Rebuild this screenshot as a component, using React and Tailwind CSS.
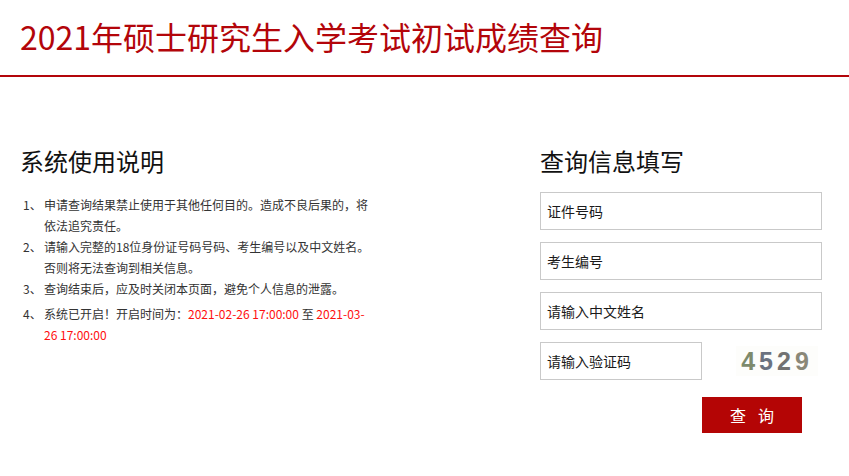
import React from "react";

const font = "font-['Noto_Sans_CJK_SC','Microsoft_YaHei',sans-serif]";

function Field({ placeholder, className = "" }) {
  return (
    <div
      className={`h-[38px] border border-[#c9c9c9] bg-white flex items-center pl-[6px] text-[14px] text-[#1a1a1a] ${className}`}
    >
      {placeholder}
    </div>
  );
}

export default function App() {
  const red = "text-[#ff1010]";
  return (
    <div className={`w-[849px] h-[476px] bg-white overflow-hidden ${font}`}>
      <header className="h-[77px] border-b-2 border-[#b3050a] pl-[20px] flex items-center pb-[4px]">
        <h1 className="text-[32px] leading-[40px] text-[#b3050a]">
          2021年硕士研究生入学考试初试成绩查询
        </h1>
      </header>

      <main className="flex pt-[66px]">
        <section className="w-[540px] pl-[20px]">
          <h2 className="text-[24px] leading-[36px] text-[#111]">系统使用说明</h2>
          <ol className="mt-[15px] text-[12px] leading-[21px] text-[#333] whitespace-nowrap">
            <li className="flex">
              <span className="w-[24px] pl-[3px] shrink-0">1、</span>
              <span>
                申请查询结果禁止使用于其他任何目的。造成不良后果的，将
                <br />
                依法追究责任。
              </span>
            </li>
            <li className="flex">
              <span className="w-[24px] pl-[3px] shrink-0">2、</span>
              <span>
                请输入完整的18位身份证号码号码、考生编号以及中文姓名。
                <br />
                否则将无法查询到相关信息。
              </span>
            </li>
            <li className="flex">
              <span className="w-[24px] pl-[3px] shrink-0">3、</span>
              <span>查询结束后，应及时关闭本页面，避免个人信息的泄露。</span>
            </li>
            <li className="flex mt-[4px]">
              <span className="w-[24px] pl-[3px] shrink-0">4、</span>
              <span>
                系统已开启！开启时间为：<span className={red}>2021-02-26 17:00:00</span> 至{" "}
                <span className={red}>2021-03-</span>
                <br />
                <span className={red}>26 17:00:00</span>
              </span>
            </li>
          </ol>
        </section>

        <section className="w-[282px]">
          <h2 className="text-[24px] leading-[36px] text-[#111]">查询信息填写</h2>
          <div className="mt-[13px] flex flex-col gap-[12px]">
            <Field placeholder="证件号码" />
            <Field placeholder="考生编号" />
            <Field placeholder="请输入中文姓名" />
            <div className="flex items-center">
              <Field placeholder="请输入验证码" className="w-[162px]" />
              <div className="ml-[34px] w-[82px] h-[30px] bg-[#fdfdfb] flex items-center justify-center font-['Liberation_Sans',sans-serif] font-bold text-[25px] tracking-[4px] leading-none">
                <span className="text-[#7d8a6c]">4</span>
                <span className="text-[#6b7280]">5</span>
                <span className="text-[#727272]">2</span>
                <span className="text-[#8a8878]">9</span>
              </div>
            </div>
          </div>
          <button className="mt-[17px] ml-[162px] w-[100px] h-[36px] bg-[#b40505] text-white text-[16px] flex items-center justify-center gap-[12px]">
            <span>查</span>
            <span>询</span>
          </button>
        </section>
      </main>
    </div>
  );
}
